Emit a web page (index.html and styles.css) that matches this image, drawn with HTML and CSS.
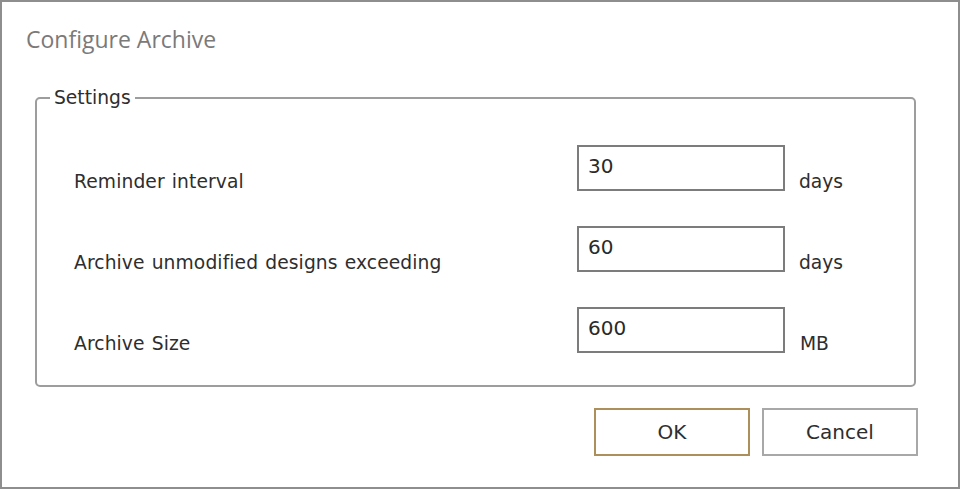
FILE: index.html
```html
<!DOCTYPE html>
<html lang="en">
<head>
    <meta charset="UTF-8">
    <title>Configure Archive</title>
    <link rel="stylesheet" href="styles.css">
</head>
<body>
    <div class="window">
        <!-- Title -->
        <div class="title">Configure Archive</div>

        <!-- Settings group -->
        <fieldset class="group">
            <legend>Settings</legend>
            <div class="rows">
                <label for="reminder">Reminder interval</label>
                <input type="text" id="reminder" value="30">
                <span class="unit">days</span>

                <label for="unmodified">Archive unmodified designs exceeding</label>
                <input type="text" id="unmodified" value="60">
                <span class="unit">days</span>

                <label for="size">Archive Size</label>
                <input type="text" id="size" value="600">
                <span class="unit unit-mb">MB</span>
            </div>
        </fieldset>

        <!-- Buttons -->
        <div class="buttons">
            <button class="btn btn-default">OK</button>
            <button class="btn">Cancel</button>
        </div>
    </div>
</body>
</html>
```

FILE: styles.css
```css
html, body {
    margin: 0;
    padding: 0;
    background: #fff;
}

body {
    font-family: "DejaVu Sans", sans-serif;
    color: #2e2e2e;
}

.window {
    width: 960px;
    height: 489px;
    box-sizing: border-box;
    border: 2px solid #8e8e8e;
    background: #fff;
}

.title {
    font-family: "Open Sans", sans-serif;
    font-size: 23px;
    line-height: 30px;
    color: #7a7a7a;
    margin: 22px 0 0 24px;
}

.group {
    margin: 33px 42px 0 33px;
    padding: 0;
    border: 2px solid #9d9d9d;
    border-radius: 5px;
    min-width: 0;
}

.group legend {
    margin-left: 13px;
    padding: 0 4px;
    font-size: 18.7px;
    line-height: 22px;
    color: #2e2e2e;
}

.rows {
    display: grid;
    grid-template-columns: 489px 208px auto;
    column-gap: 14px;
    row-gap: 33px;
    padding: 36px 0 30px 37px;
    align-items: start;
}

.rows label,
.unit {
    font-size: 18.7px;
    line-height: 22px;
    margin-top: 26px;
}

.rows label {
    word-spacing: 1px;
    letter-spacing: 0.1px;
}

.unit-mb {
    margin-left: 1px;
}

.rows input {
    width: 208px;
    height: 46px;
    box-sizing: border-box;
    margin: 0;
    padding: 7px 9px 11px;
    border: 2px solid #7c7c7c;
    border-radius: 0;
    background: #fff;
    font-family: "DejaVu Sans", sans-serif;
    font-size: 20px;
    line-height: 24px;
    color: #2a2a2a;
    outline: none;
}

.buttons {
    display: flex;
    justify-content: flex-end;
    gap: 12px;
    margin: 21px 40px 0 0;
}

.btn {
    width: 156px;
    height: 48px;
    box-sizing: border-box;
    border: 2px solid #a8a8a8;
    border-radius: 0;
    background: #fff;
    font-family: "DejaVu Sans", sans-serif;
    font-size: 20px;
    color: #2e2e2e;
    padding: 0;
}

.btn-default {
    border-color: #ad8f5c;
}
```
